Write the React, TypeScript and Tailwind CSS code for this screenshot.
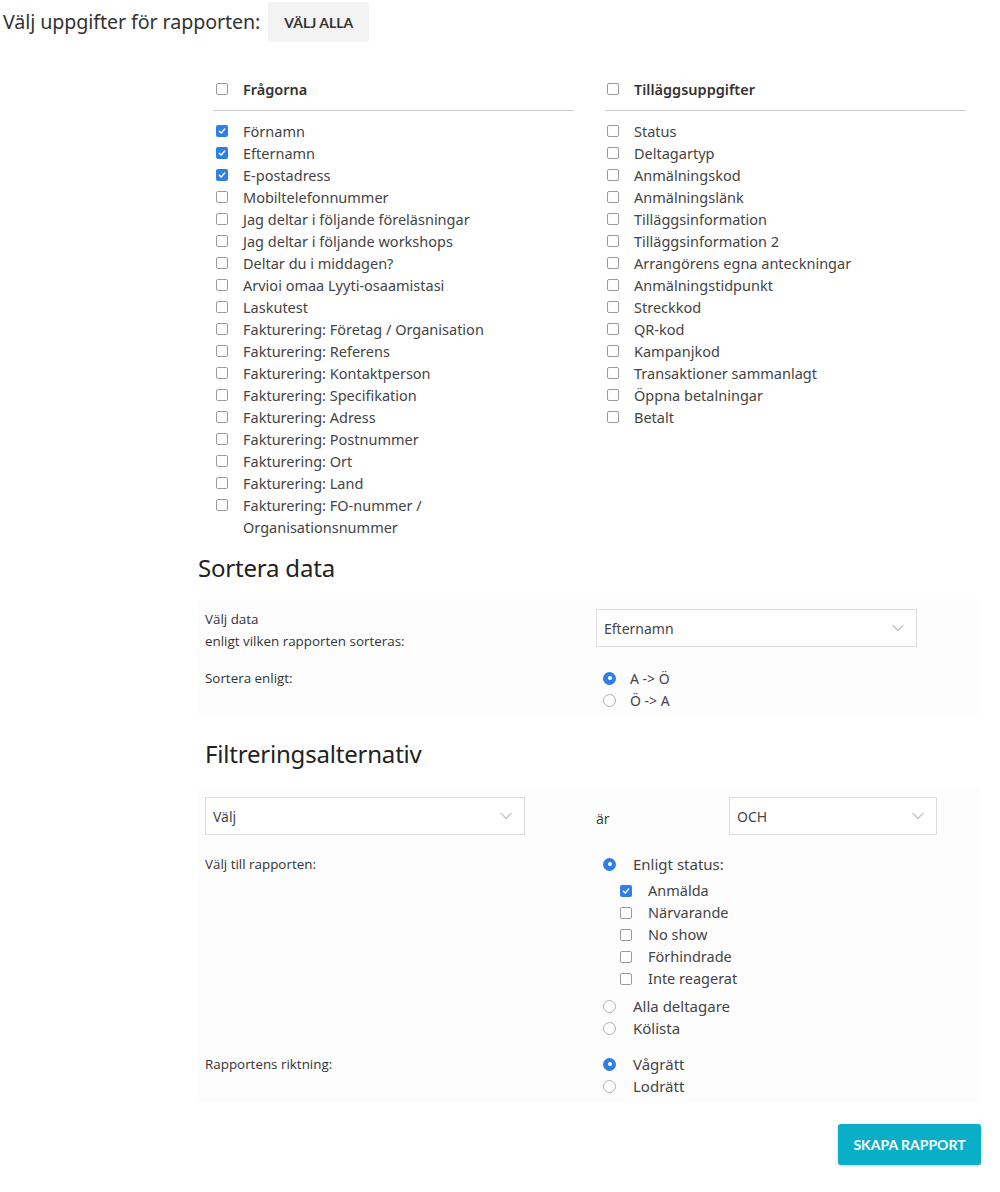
import React from 'react';
import { ChevronDown } from 'lucide-react';

const QUESTIONS = [
  { label: 'Förnamn', checked: true },
  { label: 'Efternamn', checked: true },
  { label: 'E-postadress', checked: true },
  { label: 'Mobiltelefonnummer' },
  { label: 'Jag deltar i följande föreläsningar' },
  { label: 'Jag deltar i följande workshops' },
  { label: 'Deltar du i middagen?' },
  { label: 'Arvioi omaa Lyyti-osaamistasi' },
  { label: 'Laskutest' },
  { label: 'Fakturering: Företag / Organisation' },
  { label: 'Fakturering: Referens' },
  { label: 'Fakturering: Kontaktperson' },
  { label: 'Fakturering: Specifikation' },
  { label: 'Fakturering: Adress' },
  { label: 'Fakturering: Postnummer' },
  { label: 'Fakturering: Ort' },
  { label: 'Fakturering: Land' },
  { label: 'Fakturering: FO-nummer / Organisationsnummer' },
];

const EXTRAS = [
  'Status',
  'Deltagartyp',
  'Anmälningskod',
  'Anmälningslänk',
  'Tilläggsinformation',
  'Tilläggsinformation 2',
  'Arrangörens egna anteckningar',
  'Anmälningstidpunkt',
  'Streckkod',
  'QR-kod',
  'Kampanjkod',
  'Transaktioner sammanlagt',
  'Öppna betalningar',
  'Betalt',
];

const STATUSES = [
  { label: 'Anmälda', checked: true },
  { label: 'Närvarande' },
  { label: 'No show' },
  { label: 'Förhindrade' },
  { label: 'Inte reagerat' },
];

const Box = ({ checked }: { checked?: boolean }) =>
  checked ? (
    <span className="flex h-[12px] w-[12px] shrink-0 items-center justify-center rounded-[2px] bg-[#2f7fe6]">
      <svg width="8" height="8" viewBox="0 0 8 8">
        <path d="M1.3 4.2 L3.2 6 L6.7 2" fill="none" stroke="#fff" strokeWidth="1.4" strokeLinecap="round" strokeLinejoin="round" />
      </svg>
    </span>
  ) : (
    <span className="block h-[12px] w-[12px] shrink-0 rounded-[2px] border border-[#9a9a9a] bg-white" />
  );

const Radio = ({ checked }: { checked?: boolean }) =>
  checked ? (
    <span className="flex h-[13px] w-[13px] shrink-0 items-center justify-center rounded-full bg-[#2f7fe6]">
      <span className="block h-[4px] w-[4px] rounded-full bg-white" />
    </span>
  ) : (
    <span className="block h-[13px] w-[13px] shrink-0 rounded-full border border-[#b0b0b0] bg-white" />
  );

const RadioRow = ({ label, checked, gap = 'w-[34px]' }: { label: string; checked?: boolean; gap?: string }) => (
  <div className="flex items-center h-[22px]">
    <span className={`flex shrink-0 items-center pl-[7px] ${gap}`}>
      <Radio checked={checked} />
    </span>
    <span>{label}</span>
  </div>
);

const Select = ({ value, className }: { value: string; className: string }) => (
  <div className={`flex h-[38px] items-center justify-between border border-[#dcdcdc] bg-white pl-[7px] pr-[8px] text-[14px] text-[#444] ${className}`}>
    <span>{value}</span>
    <ChevronDown size={20} strokeWidth={1.5} color="#c4c4c4" />
  </div>
);

const sideLabel = "text-[13.4px] leading-[22px] text-[#333] [font-family:'Open_Sans',sans-serif]";

const App: React.FC = () => {
  return (
    <div className="min-h-[1192px] w-[1000px] bg-white text-[#444] [font-family:'Noto_Sans','Open_Sans',sans-serif]">
      {/* Header */}
      <div className="flex items-center pt-[2px] pl-[3px]">
        <span className="text-[19.7px] text-[#333] tracking-[-0.1px]">Välj uppgifter för rapporten:</span>
        <button className="ml-[8px] h-[40px] w-[101px] rounded-[2px] bg-[#f3f3f4] text-[14px] font-bold text-[#333] [font-family:'Lato',sans-serif]">
          VÄLJ ALLA
        </button>
      </div>

      {/* Field columns */}
      <div className="ml-[213px] mt-[36px] flex w-[753px] gap-[31px] text-[14.5px]">
        <div className="w-[361px]">
          <div className="border-b border-[#cfcfcf] pb-[10px]">
            <div className="flex items-center">
              <span className="flex h-[22px] w-[30px] items-center pl-[3px]"><Box /></span>
              <span className="font-semibold text-[#333] leading-[22px]">Frågorna</span>
            </div>
          </div>
          <div className="pt-[9px]">
            {QUESTIONS.map((q) => (
              <div key={q.label} className="flex items-start">
                <span className="flex h-[22px] w-[30px] shrink-0 items-center pl-[3px]">
                  <Box checked={q.checked} />
                </span>
                <span className="leading-[22px]">
                  {q.label === 'Fakturering: FO-nummer / Organisationsnummer' ? (
                    <>Fakturering: FO-nummer /<br />Organisationsnummer</>
                  ) : (
                    q.label
                  )}
                </span>
              </div>
            ))}
          </div>
        </div>
        <div className="w-[361px]">
          <div className="border-b border-[#cfcfcf] pb-[10px]">
            <div className="flex items-center">
              <span className="flex h-[22px] w-[29px] items-center pl-[2px]"><Box /></span>
              <span className="font-semibold text-[#333] leading-[22px]">Tilläggsuppgifter</span>
            </div>
          </div>
          <div className="pt-[9px]">
            {EXTRAS.map((e) => (
              <div key={e} className="flex items-start">
                <span className="flex h-[22px] w-[29px] shrink-0 items-center pl-[2px]">
                  <Box />
                </span>
                <span className="leading-[22px]">{e}</span>
              </div>
            ))}
          </div>
        </div>
      </div>

      {/* Sort */}
      <div className="ml-[197px] w-[783px]">
        <h2 className="mt-[14px] pl-[1px] text-[24px] leading-[32px] text-[#222] tracking-[-0.2px]">Sortera data</h2>
        <div className="mt-[14px] bg-[#fdfdfd] pl-[8px] pt-[10px] pb-[4px]">
          <div className="flex items-start">
            <div className={`w-[391px] ${sideLabel}`}>
              Välj data
              <br />
              enligt vilken rapporten sorteras:
            </div>
            <Select value="Efternamn" className="mt-[1px] w-[321px]" />
          </div>
          <div className="mt-[15px] flex items-start">
            <div className={`w-[391px] ${sideLabel}`}>Sortera enligt:</div>
            <div className="text-[14px] text-[#444]">
              <RadioRow label="A -> Ö" checked />
              <RadioRow label="Ö -> A" />
            </div>
          </div>
        </div>

        {/* Filter */}
        <h2 className="mt-[23px] pl-[8px] text-[24px] leading-[32px] text-[#222] tracking-[-0.2px]">Filtreringsalternativ</h2>
        <div className="mt-[17px] bg-[#fdfdfd] pl-[8px] pt-[10px] pb-[5px]">
          <div className="flex items-center">
            <Select value="Välj" className="w-[320px]" />
            <span className="ml-[71px] mt-[4px] w-[133px] text-[14px] text-[#444]">är</span>
            <Select value="OCH" className="w-[208px]" />
          </div>
          <div className="mt-[18px] flex items-start">
            <div className={`w-[391px] ${sideLabel}`}>Välj till rapporten:</div>
            <div className="text-[15px] text-[#444]">
              <RadioRow label="Enligt status:" checked gap="w-[37px]" />
              <div className="mt-[5px] pl-[17px] text-[14.5px]">
                {STATUSES.map((s) => (
                  <div key={s.label} className="flex items-center h-[22px]">
                    <span className="flex w-[35px] shrink-0 items-center pl-[7px]">
                      <Box checked={s.checked} />
                    </span>
                    <span>{s.label}</span>
                  </div>
                ))}
              </div>
              <div className="mt-[5px]">
                <RadioRow label="Alla deltagare" gap="w-[37px]" />
                <RadioRow label="Kölista" gap="w-[37px]" />
              </div>
            </div>
          </div>
          <div className="mt-[14px] flex items-start">
            <div className={`w-[391px] ${sideLabel}`}>Rapportens riktning:</div>
            <div className="text-[15px] text-[#444]">
              <RadioRow label="Vågrätt" checked gap="w-[37px]" />
              <RadioRow label="Lodrätt" gap="w-[37px]" />
            </div>
          </div>
        </div>
      </div>

      {/* Submit */}
      <div className="mt-[22px] flex justify-end pr-[19px]">
        <button className="h-[41px] w-[143px] rounded-[3px] bg-[#0aaec7] text-[14px] font-bold text-white shadow-[0_1px_3px_rgba(0,0,0,0.2)] [font-family:'Lato',sans-serif]">
          SKAPA RAPPORT
        </button>
      </div>
    </div>
  );
};

export default App;
